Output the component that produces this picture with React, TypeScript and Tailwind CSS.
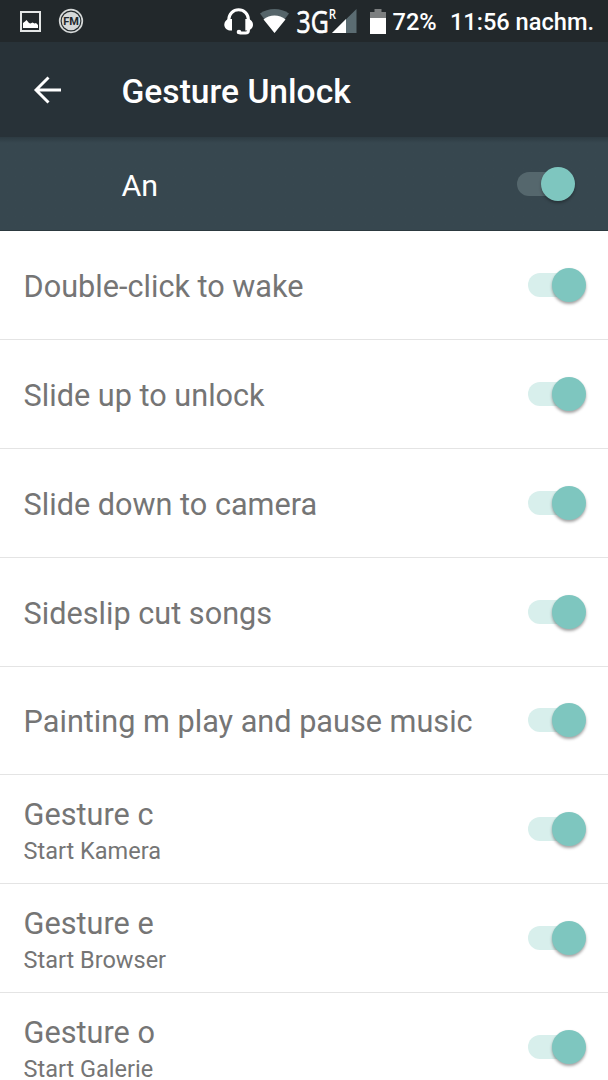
import { useState } from "react";

type Gesture = {
  title: string;
  summary?: string;
};

const gestures: Gesture[] = [
  { title: "Double-click to wake" },
  { title: "Slide up to unlock" },
  { title: "Slide down to camera" },
  { title: "Sideslip cut songs" },
  { title: "Painting m play and pause music" },
  { title: "Gesture c", summary: "Start Kamera" },
  { title: "Gesture e", summary: "Start Browser" },
  { title: "Gesture o", summary: "Start Galerie" },
];

function Switch({ label, dark = false }: { label: string; dark?: boolean }) {
  const [on, setOn] = useState(true);

  return (
    <button
      role="switch"
      aria-checked={on}
      aria-label={label}
      onClick={() => setOn(!on)}
      className={`flex h-6 w-[58px] shrink-0 items-center ${on ? "justify-end" : "justify-start"}`}
    >
      <span className={`h-6 w-10 shrink-0 rounded-full ${dark ? "bg-[#55676d]" : "bg-[#d8efec]"}`} />
      <span
        className={`-ml-4 size-[34px] shrink-0 rounded-full bg-[#7ec6bf] ${
          dark ? "shadow-[0_2px_3px_rgba(0,0,0,0.3)]" : "shadow-[0_2px_3px_rgba(0,0,0,0.36)]"
        }`}
      />
    </button>
  );
}

function StatusBar() {
  return (
    <div className="flex h-[42px] items-center bg-[#22282b] font-medium text-white">
      <svg className="ml-5 size-[21px] shrink-0" viewBox="0 0 21 21">
        <rect x="1" y="1" width="19" height="19" fill="none" stroke="#e4e6e6" strokeWidth="2" />
        <path d="M3 17v-5l2-1.500L6.500 9 9 12l1.500.5 2-1 2 1 1.500-.5 2 2v3z" fill="#fff" />
      </svg>
      <svg className="ml-[17px] size-[26px] shrink-0" viewBox="0 0 26 26">
        <circle cx="13" cy="13" r="11.300" fill="none" stroke="#d5d8d8" strokeWidth="1.700" />
        <circle cx="13" cy="13" r="9.300" fill="#d5d8d8" />
        <text x="13" y="16.800" textAnchor="middle" fontSize="11" fontWeight="700" fill="#22282b" fontFamily="Roboto, sans-serif">
          FM
        </text>
      </svg>

      <svg className="ml-[140px] h-7 w-[29px] shrink-0" viewBox="0 0 29 28">
        <path d="M4.800 15V12.500a9.800 9.800 0 0 1 19.600 0V15" fill="none" stroke="#fff" strokeWidth="3" />
        <path d="M8 12v11.500H5.500C2.500 23 .3 20.800.3 17.800S2 13 4 12z" fill="#fff" />
        <path d="M21.300 12v11.500h2.500c3-.5 5.200-2.700 5.200-5.700S27.200 13 25.200 12z" fill="#fff" />
        <path d="M24.500 22v1.500c0 1.800-1 2.500-3 2.500h-6" fill="none" stroke="#fff" strokeWidth="2.800" />
        <circle cx="15" cy="25" r="2.300" fill="#fff" />
      </svg>
      <svg className="ml-[7px] h-7 w-[29px] shrink-0" viewBox="0 0 29 28">
        <path d="M14.500 26 0 6.500C8 .5 21 .5 29 6.500z" fill="#56656a" />
        <path d="M14.500 26 3.500 12.500c6-5.500 16-5.500 22 0z" fill="#fff" />
      </svg>
      <svg className="ml-2 h-8 w-[60px] shrink-0 overflow-visible" viewBox="0 0 60 32">
        <path d="M59.500 4v24H35z" fill="#5b6c72" />
        <path d="M49 14v14H35z" fill="#fff" />
        <text transform="translate(-0.5 28) scale(0.8 1)" fontSize="31" fill="#fff" stroke="#fff" strokeWidth="0.700" fontFamily="'Open Sans', sans-serif">
          3G
        </text>
        <text transform="translate(31.700 13.800) scale(0.82 1)" fontSize="14" fontWeight="600" fill="#fff" fontFamily="'Open Sans', sans-serif">
          R
        </text>
      </svg>
      <svg className="ml-[13px] h-[25px] w-4 shrink-0" viewBox="0 0 16 25">
        <path d="M4.500 0h7v3H16v6H0V3h4.500z" fill="#7c7f80" />
        <path d="M0 9h16v16H0z" fill="#fff" />
      </svg>
      <span className="ml-[6.500px] pt-0.5 text-[23.600px] leading-7">72%</span>
      <span className="ml-auto mr-3.5 pt-0.5 text-[23.600px] leading-7">11:56 nachm.</span>
    </div>
  );
}

function Toolbar() {
  return (
    <header className="flex h-[95px] items-center bg-[#283238] text-white">
      <button aria-label="Back" className="ml-[33px] mr-[60.500px]">
        <svg className="h-7 w-7" viewBox="0 0 28 28" fill="none" stroke="#fff" strokeWidth="2.900">
          <path d="M28 14H3M15.500 1.500 3 14l12.500 12.500" />
        </svg>
      </button>
      <h1 className="mt-1 text-[33.600px] font-medium leading-10">Gesture Unlock</h1>
    </header>
  );
}

function GestureRow({ title, summary }: Gesture) {
  return (
    <li className="flex h-[108.800px] items-center justify-between border-b border-[#e4e4e4] pl-[23.600px] pr-[22.500px] text-[#757575]">
      <div className="pt-1">
        <div className="text-[30.650px] leading-10">{title}</div>
        {summary && <div className="text-[23.500px] leading-8">{summary}</div>}
      </div>
      <Switch label={title} />
    </li>
  );
}

export default function App() {
  return (
    <div className="h-[1080px] w-[608px] overflow-hidden bg-white font-['Roboto',sans-serif]">
      <StatusBar />
      <Toolbar />
      <div className="flex h-[94.400px] items-center justify-between border-b border-[#2c393f] bg-[#37474f] bg-linear-to-b from-[#2d3b42] to-[#37474f] to-[6px] pl-[121.500px] pr-[33px] text-white">
        <span className="pt-1 text-[30.400px] leading-9">An</span>
        <Switch label="Gesture Unlock" dark />
      </div>
      <ul>
        {gestures.map((gesture) => (
          <GestureRow key={gesture.title} {...gesture} />
        ))}
      </ul>
    </div>
  );
}
